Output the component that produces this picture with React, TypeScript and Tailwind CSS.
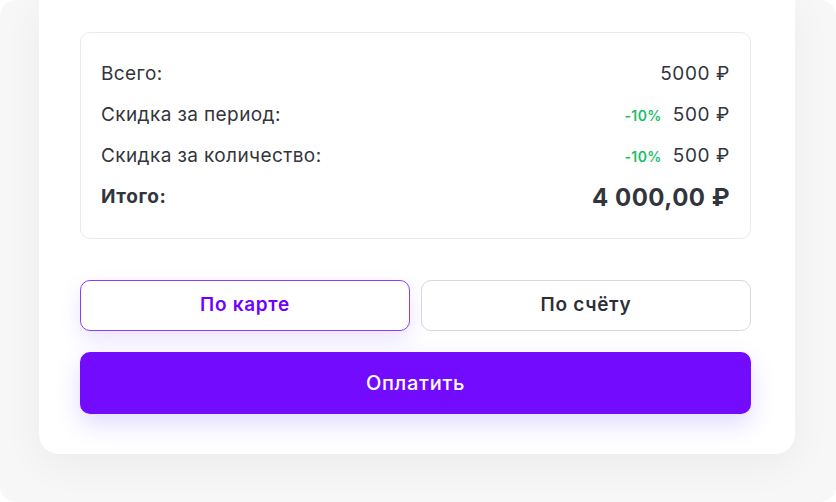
import React from 'react';

const rows = [
  { label: 'Всего:', value: '5000 ₽' },
  { label: 'Скидка за период:', discount: '-10%', value: '500 ₽' },
  { label: 'Скидка за количество:', discount: '-10%', value: '500 ₽' },
];

const App: React.FC = () => {
  return (
    <div className="w-[836px] h-[502px] bg-white" style={{ fontFamily: 'Inter, "Noto Sans", sans-serif' }}>
      <div className="w-full h-full rounded-[16px] bg-[#f7f7f7] overflow-hidden">
        <div className="ml-[39px] w-[756px] h-[454px] bg-white rounded-b-[20px] shadow-[0_10px_40px_rgba(0,0,0,0.05)] pl-[41px] pr-[44px] pt-[32px]">
          {/* Summary */}
          <div className="border border-[#e9ebef] rounded-[10px] px-[20px] pt-[21px] pb-[20px] text-[#33353d]">
            {rows.map((row) => (
              <div key={row.label} className="h-[41px] flex items-center justify-between">
                <span className="text-[19px] tracking-[0.4px]">{row.label}</span>
                <span className="flex items-center gap-[11px]">
                  {row.discount && (
                    <span className="text-[14px] font-semibold tracking-[0.4px] text-[#1cbf66]">{row.discount}</span>
                  )}
                  <span className="text-[19px] tracking-[0.6px]">{row.value}</span>
                </span>
              </div>
            ))}
            <div className="h-[41px] flex items-center justify-between">
              <span className="text-[19px] font-bold tracking-[0.6px]">Итого:</span>
              <span className="text-[24px] font-bold tracking-[0.5px]">4 000,00 ₽</span>
            </div>
          </div>

          {/* Payment method */}
          <div className="mt-[41px] grid grid-cols-2 gap-[11px]">
            <button className="h-[51px] rounded-[10px] border border-[#8a3dff] bg-white text-[#7000ff] text-[19px] font-semibold tracking-[0.7px] shadow-[0_8px_20px_rgba(112,70,255,0.15)]">
              По карте
            </button>
            <button className="h-[51px] rounded-[10px] border border-[#d5d8df] bg-white text-[#2e3038] text-[19px] font-semibold tracking-[0.7px]">
              По счёту
            </button>
          </div>

          {/* Pay */}
          <button className="mt-[21px] w-full h-[62px] rounded-[10px] bg-[#730bff] text-white text-[20px] font-medium tracking-[0.7px] shadow-[0_10px_25px_rgba(100,70,255,0.2)]">
            Оплатить
          </button>
        </div>
      </div>
    </div>
  );
};

export default App;
